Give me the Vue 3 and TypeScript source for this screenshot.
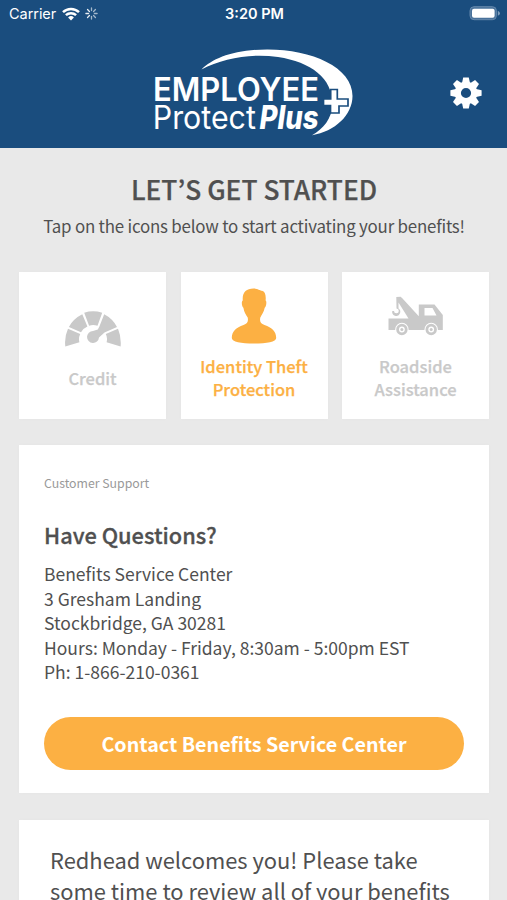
<script setup lang="ts">
interface Benefit {
  id: string
  lines: string[]
  active: boolean
}

const benefits: Benefit[] = [
  { id: 'credit', lines: ['Credit'], active: false },
  { id: 'identity', lines: ['Identity Theft', 'Protection'], active: true },
  { id: 'roadside', lines: ['Roadside', 'Assistance'], active: false },
]

const contact: string[] = [
  'Benefits Service Center',
  '3 Gresham Landing',
  'Stockbridge, GA 30281',
  'Hours: Monday - Friday, 8:30am - 5:00pm EST',
  'Ph: 1-866-210-0361',
]

const welcome: string[] = [
  'Redhead welcomes you! Please take',
  'some time to review all of your benefits',
]

const spokes: number[] = [0, 45, 90, 135, 180, 225, 270, 315]
</script>

<template>
  <div class="screen">
    <header class="header">
      <div class="status">
        <div class="status-left">
          <span class="carrier">Carrier</span>
          <svg class="wifi" width="18" height="14" viewBox="0 0 18 14">
            <g fill="none" stroke="#fff" stroke-width="2.5">
              <path d="M1 5.2A11.6 11.6 0 0 1 17 5.2" />
              <path d="M3.9 8.2A7.4 7.4 0 0 1 14.1 8.2" />
            </g>
            <path d="M9 13.4 6.1 10.4A4.2 4.2 0 0 1 11.9 10.4Z" fill="#fff" />
          </svg>
          <svg class="spinner" width="13" height="13" viewBox="-6.5 -6.5 13 13">
            <line
              v-for="(angle, i) in spokes"
              :key="angle"
              x1="0" y1="-2.9" x2="0" y2="-5.6"
              stroke="#fff"
              stroke-width="1.3"
              stroke-linecap="round"
              :opacity="i > 4 ? 0.9 : 0.6"
              :transform="`rotate(${angle})`"
            />
          </svg>
        </div>
        <span class="time">3:20 PM</span>
        <div class="status-right">
          <svg width="32" height="16" viewBox="0 0 32 16">
            <rect x="1" y="0.7" width="26.4" height="13" rx="4" fill="#49729b" stroke="#6488ac" stroke-width="1" />
            <rect x="3" y="2.7" width="22.6" height="9" rx="2" fill="#fff" />
            <path d="M28.8 4.7Q31 5.7 31 7.2T28.8 9.7Z" fill="#7f9dbb" />
          </svg>
        </div>
      </div>

      <div class="brand-row">
        <svg class="logo" width="215" height="100" viewBox="0 0 215 100">
          <path
            fill="#fff"
            d="M56.500 29.500C68 18.500 88 9.600 122 9.500C166 9.300 207.500 27 207.500 56C207.500 75 190 91.500 167 95.200C178 89 187 79 187.500 64C187.500 38 166 22 133 17C107 13 78 18 56.500 29.500Z"
          />
          <path
            d="M185.700 49.500H192.300V59H203V66H194V73H185.500V65.500H178.500V59H185.700Z"
            fill="#fff"
            stroke="#1a4d7e"
            stroke-width="1.700"
          />
          <text class="logo-name" x="8" y="61" textLength="166" lengthAdjust="spacingAndGlyphs">EMPLOYEE</text>
          <text class="logo-protect" x="7.800" y="89.300" textLength="103" lengthAdjust="spacingAndGlyphs">Protect</text>
          <text class="logo-plus" x="114.500" y="89.300" textLength="59" lengthAdjust="spacingAndGlyphs">Plus</text>
        </svg>
        <svg class="gear" width="32" height="32" viewBox="-16 -16 32 32">
          <g fill="#fff">
            <path
              v-for="angle in spokes"
              :key="angle"
              d="M-4.200 -9 -2.800 -15.600H2.800L4.200 -9Z"
              :transform="`rotate(${angle})`"
            />
          </g>
          <circle r="8.200" fill="none" stroke="#fff" stroke-width="6.200" />
        </svg>
      </div>
    </header>

    <main class="content">
      <h1 class="title">LET’S GET STARTED</h1>
      <p class="subtitle">Tap on the icons below to start activating your benefits!</p>

      <div class="tiles">
        <div v-for="b in benefits" :key="b.id" class="tile" :class="{ active: b.active, single: b.lines.length === 1 }">
          <svg v-if="b.id === 'credit'" width="56" height="36" viewBox="0 0 56 36">
            <g fill="currentColor">
              <path d="M0.300 35.500Q-0.800 26 3 17.800L15.200 23.100Q13.300 27 14.400 31.200Z" />
              <path d="M3.900 15.900Q8.500 7.600 17.300 3.300L22.400 15.500Q18 17.400 16 21.300Z" />
              <path d="M19.200 1.800Q28 -1.100 37.200 1.800L32.500 14.700Q28 13.200 24.100 14.700Z" />
              <path d="M39.200 3.300Q47.400 7.500 52 15.900L39.500 21.500L34 26.500A6 6 0 1 1 28 20L32.800 18.600L34.400 15.400Z" />
              <path d="M53 17.800Q56.500 26 55.600 35.500L41.600 31.200Q42.800 27 40.800 23.100Z" />
            </g>
          </svg>
          <svg v-else-if="b.id === 'identity'" width="46" height="56" viewBox="0 0 46 56">
            <path
              fill="currentColor"
              d="M22.500 0.400C27 0.400 28.500 2.500 31 2.700C34 3.500 35.200 7 34.600 12.500C36 13 35.300 18.500 33.700 19.800C33 24 30.500 27 29.300 29.500C28.500 33.500 29.500 35.500 33.500 37C41 39.500 45.200 43.500 45.200 50C45.200 53.800 36 55.600 23 55.600S0.800 53.800 0.800 50C0.800 43.500 5 39.500 12.500 37C16.500 35.500 17.500 33.500 16.700 29.500C15 27 13 24 12.400 19.800C10.700 18.500 10.200 13 11.800 12.500C11 4.500 15 0.400 22.500 0.400Z"
            />
          </svg>
          <svg v-else width="56" height="41" viewBox="0 0 56 41">
            <path
              fill="currentColor"
              fill-rule="evenodd"
              d="M8.300 1 12.600 0.700 14.300 2.200 30.800 20.300V8.500H46.500L54.800 19V34H0.500V22.600H20.500L10.500 6.500V12.600A4 4 0 1 1 4.300 15L6 14.900A2.400 2.400 0 1 0 8.500 12.500ZM36.500 12V19.500H48.500L44.500 12Z"
            />
            <g v-for="x in [13.900, 43.200]" :key="x">
              <circle :cx="x" cy="33.500" r="6.700" fill="#fff" />
              <circle :cx="x" cy="33.500" r="4.300" fill="#fff" stroke="currentColor" stroke-width="2.800" />
              <circle :cx="x" cy="33.500" r="1.500" fill="currentColor" />
            </g>
          </svg>
          <div class="tile-label">
            <div v-for="line in b.lines" :key="line">{{ line }}</div>
          </div>
        </div>
      </div>

      <section class="card support">
        <div class="eyebrow">Customer Support</div>
        <h2 class="question">Have Questions?</h2>
        <div class="contact">
          <div v-for="line in contact" :key="line">{{ line }}</div>
        </div>
        <button class="cta" type="button">Contact Benefits Service Center</button>
      </section>

      <section class="card welcome">
        <div v-for="line in welcome" :key="line">{{ line }}</div>
      </section>
    </main>
  </div>
</template>

<style>
body {
  margin: 0;
  background: #e9e9e9;
  overflow: hidden;
}
</style>

<style scoped>
.screen {
  width: 507px;
  height: 900px;
  overflow: hidden;
  background: #e9e9e9;
  color: #505050;
  font-family: 'Noto Sans CJK JP', 'Noto Sans CJK SC', 'Open Sans', sans-serif;
}
.header {
  height: 147.500px;
  background: #1a4d7e;
  color: #fff;
}
.status {
  display: grid;
  grid-template-columns: 1fr auto 1fr;
  align-items: center;
  height: 27px;
  padding: 0 6px 0 9px;
  font-family: Inter, sans-serif;
}
.status-left {
  display: flex;
  align-items: center;
}
.carrier {
  font-size: 14.500px;
  letter-spacing: -0.050px;
}
.wifi {
  margin-left: 6px;
}
.spinner {
  margin-left: 5px;
}
.time {
  margin-left: -1px;
  font-size: 14.500px;
  font-weight: 600;
}
.status-right {
  display: flex;
  justify-content: flex-end;
}
.brand-row {
  display: flex;
  align-items: flex-start;
  padding: 13px 25px 0 145px;
}
.logo {
  flex: none;
}
.logo text {
  fill: #fff;
  font-family: Inter, sans-serif;
  font-size: 32px;
}
.logo .logo-name {
  font-weight: 600;
}
.logo .logo-plus {
  font-weight: 800;
  font-style: italic;
}
.gear {
  margin: 37px 0 0 auto;
}
.content {
  padding: 0 18px 0 19px;
}
.title {
  margin: 0;
  padding-top: 23.500px;
  font-size: 26.300px;
  line-height: 36px;
  font-weight: 500;
  text-align: center;
  white-space: nowrap;
  -webkit-text-stroke: 0.250px currentColor;
}
.subtitle {
  margin: 6px 0 0;
  font-size: 16.900px;
  letter-spacing: -0.210px;
  line-height: 26px;
  text-align: center;
  white-space: nowrap;
}
.tiles {
  display: grid;
  grid-template-columns: repeat(3, 147px);
  justify-content: space-between;
  margin-top: 32.500px;
}
.tile {
  display: flex;
  flex-direction: column;
  align-items: center;
  justify-content: flex-end;
  box-sizing: border-box;
  height: 147px;
  padding-bottom: 17.500px;
  background: #fff;
  color: #c9c9c9;
  box-shadow: 0 0 5px rgba(0, 0, 0, 0.020);
}
.tile.active {
  color: #fcb043;
}
.tile.single {
  padding-bottom: 29px;
}
.tile-label {
  margin-top: 11px;
  font-size: 16.500px;
  line-height: 23px;
  font-weight: 500;
  text-align: center;
  white-space: nowrap;
  -webkit-text-stroke: 0.250px currentColor;
}
.tile.single .tile-label {
  margin-top: 20px;
}
.tile:last-child .tile-label {
  margin-top: 18px;
}
.card {
  margin-top: 26.500px;
  background: #fff;
  box-shadow: 0 0 5px rgba(0, 0, 0, 0.020);
  white-space: nowrap;
}
.support {
  box-sizing: border-box;
  height: 348px;
  padding: 28px 25px 0;
}
.eyebrow {
  color: #999;
  font-size: 12.300px;
  line-height: 20px;
}
.question {
  margin: 25px 0 0;
  font-size: 21.800px;
  line-height: 34px;
  font-weight: 500;
  -webkit-text-stroke: 0.300px currentColor;
}
.contact {
  margin-top: 10px;
  font-size: 17.500px;
  line-height: 24.600px;
}
.cta {
  display: block;
  width: 100%;
  height: 53px;
  margin-top: 32px;
  padding: 0;
  border: 0;
  border-radius: 27px;
  background: #fcb043;
  color: #fff;
  font: 700 19.700px/53px 'Noto Sans CJK JP', 'Noto Sans CJK SC', sans-serif;
}
.welcome {
  height: 200px;
  padding: 24px 0 0 31px;
  font-size: 21.900px;
  line-height: 31px;
}
</style>
